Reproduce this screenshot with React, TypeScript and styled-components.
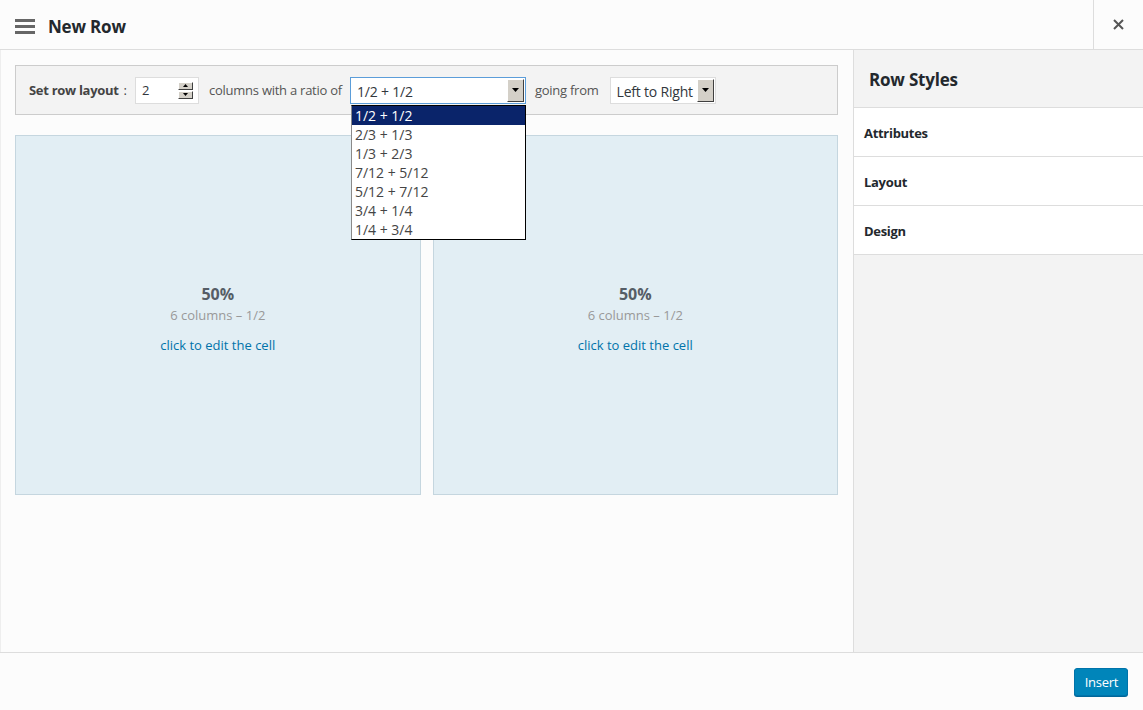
import React from "react";
import styled, { createGlobalStyle } from "styled-components";

const Global = createGlobalStyle`
  html, body { margin: 0; padding: 0; }
  body { font-family: "Open Sans", "Noto Sans", sans-serif; color: #23282d; background: #fcfcfc; }
  #root { width: 1143px; height: 710px; }
  * { box-sizing: border-box; }
`;

const Frame = styled.div`
  width: 1143px;
  height: 710px;
  display: flex;
  flex-direction: column;
  background: #fcfcfc;
  overflow: hidden;
`;

const Header = styled.header`
  height: 50px;
  flex: none;
  display: flex;
  align-items: center;
  border-bottom: 1px solid #dddddd;
  background: #fcfcfc;
`;

const Burger = styled.div`
  width: 20px;
  margin-left: 15px;
  margin-top: 3px;
  display: flex;
  flex-direction: column;
  gap: 3px;
  span { display: block; height: 3px; background: #666; }
`;

const Title = styled.h1`
  margin: 3px 0 0 13px;
  font-size: 17px;
  font-weight: 700;
  color: #23282d;
  flex: 1;
  letter-spacing: -0.2px;
`;

const CloseBtn = styled.div`
  width: 50px;
  height: 49px;
  border-left: 1px solid #dddddd;
  display: flex;
  align-items: center;
  justify-content: center;
  color: #666;
`;

const Body = styled.div`
  flex: 1;
  display: flex;
  min-height: 0;
`;

const Main = styled.main`
  flex: 1;
  padding: 15px 15px 0 14px;
  border-left: 1px solid #eeeeee;
  display: flex;
  flex-direction: column;
  gap: 20px;
`;

const Toolbar = styled.div`
  height: 50px;
  background: #f3f3f3;
  border: 1px solid #cccccc;
  display: flex;
  align-items: center;
  padding-left: 13px;
  font-size: 13px;
  color: #555;
  position: relative;
`;

const Label = styled.span`
  font-weight: 700;
  color: #444;
  margin-right: 5px;
  letter-spacing: -0.3px;
`;

const Colon = styled.span`
  color: #444;
  margin-right: 8px;
`;

const Text = styled.span<{ $ml?: number }>`
  margin-left: ${(p) => p.$ml ?? 0}px;
  color: #555;
  letter-spacing: -0.25px;
`;

const NumBox = styled.div`
  width: 64px;
  height: 27px;
  background: #fff;
  border: 1px solid #dddddd;
  display: flex;
  align-items: center;
  padding-left: 6px;
  font-size: 13px;
  color: #32373c;
  justify-content: space-between;
  padding-right: 5px;
`;

const Spin = styled.div`
  width: 15px;
  height: 17px;
  display: flex;
  flex-direction: column;
  gap: 1px;
`;

const SpinBtn = styled.div`
  flex: 1;
  background: #d4d0c8;
  border-top: 1px solid #fff;
  border-left: 1px solid #fff;
  border-right: 1px solid #404040;
  border-bottom: 1px solid #404040;
  display: flex;
  align-items: center;
  justify-content: center;
`;

const SelectBox = styled.div<{ $w: number; $ml: number; $focus?: boolean }>`
  width: ${(p) => p.$w}px;
  margin-left: ${(p) => p.$ml}px;
  height: 27px;
  background: #fff;
  border: 1px solid ${(p) => (p.$focus ? "#5b9dd9" : "#dddddd")};
  display: flex;
  align-items: stretch;
  font-size: 14px;
  color: #32373c;
  position: relative;
`;

const SelectValue = styled.div`
  flex: 1;
  display: flex;
  align-items: center;
  padding-left: 6px;
  padding-top: 2px;
  letter-spacing: -0.2px;
`;

const Arrow = styled.div`
  width: 17px;
  margin: 1px;
  background: #d4d0c8;
  border-top: 1px solid #fff;
  border-left: 1px solid #fff;
  border-right: 1px solid #404040;
  border-bottom: 1px solid #404040;
  display: flex;
  align-items: center;
  justify-content: center;
`;

const DropList = styled.ul`
  position: absolute;
  top: 27px;
  left: 0px;
  width: 175px;
  margin: 0;
  padding: 0;
  list-style: none;
  background: #fff;
  border: 1px solid #000;
  border-left-color: #8a8a8a;
  z-index: 5;
`;

const DropItem = styled.li<{ $active?: boolean }>`
  height: 19px;
  line-height: 19px;
  padding-left: 3px;
  font-size: 14px;
  background: ${(p) => (p.$active ? "#0a246a" : "#fff")};
  color: ${(p) => (p.$active ? "#fff" : "#444")};
`;

const Cells = styled.div`
  display: grid;
  grid-template-columns: 1fr 1fr;
  gap: 12px;
`;

const Cell = styled.div`
  height: 360px;
  background: #e2eef4;
  border: 1px solid #c5d6df;
  display: flex;
  flex-direction: column;
  align-items: center;
  justify-content: center;
  padding-top: 6px;
`;

const Pct = styled.div`
  font-size: 16px;
  font-weight: 700;
  color: #555d66;
`;

const Sub = styled.div`
  font-size: 13px;
  color: #999;
  margin-top: 1px;
`;

const EditLink = styled.a`
  font-size: 13px;
  color: #0073aa;
  margin-top: 12px;
  text-decoration: none;
`;

const Side = styled.aside`
  width: 290px;
  flex: none;
  border-left: 1px solid #dddddd;
  background: #f3f3f3;
`;

const SideHead = styled.div`
  height: 58px;
  display: flex;
  align-items: center;
  padding-left: 15px;
  font-size: 17px;
  font-weight: 700;
  color: #23282d;
  border-bottom: 1px solid #dddddd;
  padding-top: 1px;
  letter-spacing: -0.2px;
`;

const SideItem = styled.div`
  height: 49px;
  background: #fff;
  border-bottom: 1px solid #dddddd;
  display: flex;
  align-items: center;
  padding-left: 10px;
  padding-top: 2px;
  font-size: 13px;
  font-weight: 700;
  color: #23282d;
  letter-spacing: -0.3px;
`;

const Footer = styled.footer`
  height: 58px;
  flex: none;
  border-top: 1px solid #dddddd;
  background: #fcfcfc;
  display: flex;
  justify-content: flex-end;
  align-items: flex-start;
  padding: 15px 15px 0 0;
`;

const InsertBtn = styled.button`
  height: 28px;
  padding: 0 9px 0 10px;
  background: #0085ba;
  border: 1px solid #0073aa;
  border-radius: 3px;
  box-shadow: 0 1px 0 #006799;
  color: #fff;
  font-family: inherit;
  font-size: 13px;
  line-height: 26px;
  letter-spacing: -0.3px;
`;

const TriDown = () => (
  <svg width="7" height="4" viewBox="0 0 7 4">
    <path d="M0 0h7L3.5 4z" fill="#000" />
  </svg>
);

const options = ["1/2 + 1/2", "2/3 + 1/3", "1/3 + 2/3", "7/12 + 5/12", "5/12 + 7/12", "3/4 + 1/4", "1/4 + 3/4"];

export default function App() {
  return (
    <>
      <Global />
      <Frame>
        <Header>
          <Burger>
            <span />
            <span />
            <span />
          </Burger>
          <Title>New Row</Title>
          <CloseBtn>
            <svg width="11" height="11" viewBox="0 0 11 11">
              <path d="M1 1L10 10M10 1L1 10" stroke="#555" strokeWidth="2" />
            </svg>
          </CloseBtn>
        </Header>
        <Body>
          <Main>
            <Toolbar>
              <Label>Set row layout</Label>
              <Colon>:</Colon>
              <NumBox>
                2
                <Spin>
                  <SpinBtn>
                    <svg width="5" height="3" viewBox="0 0 5 3"><path d="M2.5 0L5 3H0z" fill="#000" /></svg>
                  </SpinBtn>
                  <SpinBtn>
                    <svg width="5" height="3" viewBox="0 0 5 3"><path d="M0 0h5L2.5 3z" fill="#000" /></svg>
                  </SpinBtn>
                </Spin>
              </NumBox>
              <Text $ml={10}>columns with a ratio of</Text>
              <SelectBox $w={176} $ml={8} $focus>
                <SelectValue>1/2 + 1/2</SelectValue>
                <Arrow><TriDown /></Arrow>
                <DropList>
                  {options.map((o, i) => (
                    <DropItem key={o} $active={i === 0}>{o}</DropItem>
                  ))}
                </DropList>
              </SelectBox>
              <Text $ml={9}>going from</Text>
              <SelectBox $w={106} $ml={11}>
                <SelectValue>Left to Right</SelectValue>
                <Arrow><TriDown /></Arrow>
              </SelectBox>
            </Toolbar>
            <Cells>
              {[0, 1].map((i) => (
                <Cell key={i}>
                  <Pct>50%</Pct>
                  <Sub>6 columns – 1/2</Sub>
                  <EditLink>click to edit the cell</EditLink>
                </Cell>
              ))}
            </Cells>
          </Main>
          <Side>
            <SideHead>Row Styles</SideHead>
            <SideItem>Attributes</SideItem>
            <SideItem>Layout</SideItem>
            <SideItem>Design</SideItem>
          </Side>
        </Body>
        <Footer>
          <InsertBtn>Insert</InsertBtn>
        </Footer>
      </Frame>
    </>
  );
}
